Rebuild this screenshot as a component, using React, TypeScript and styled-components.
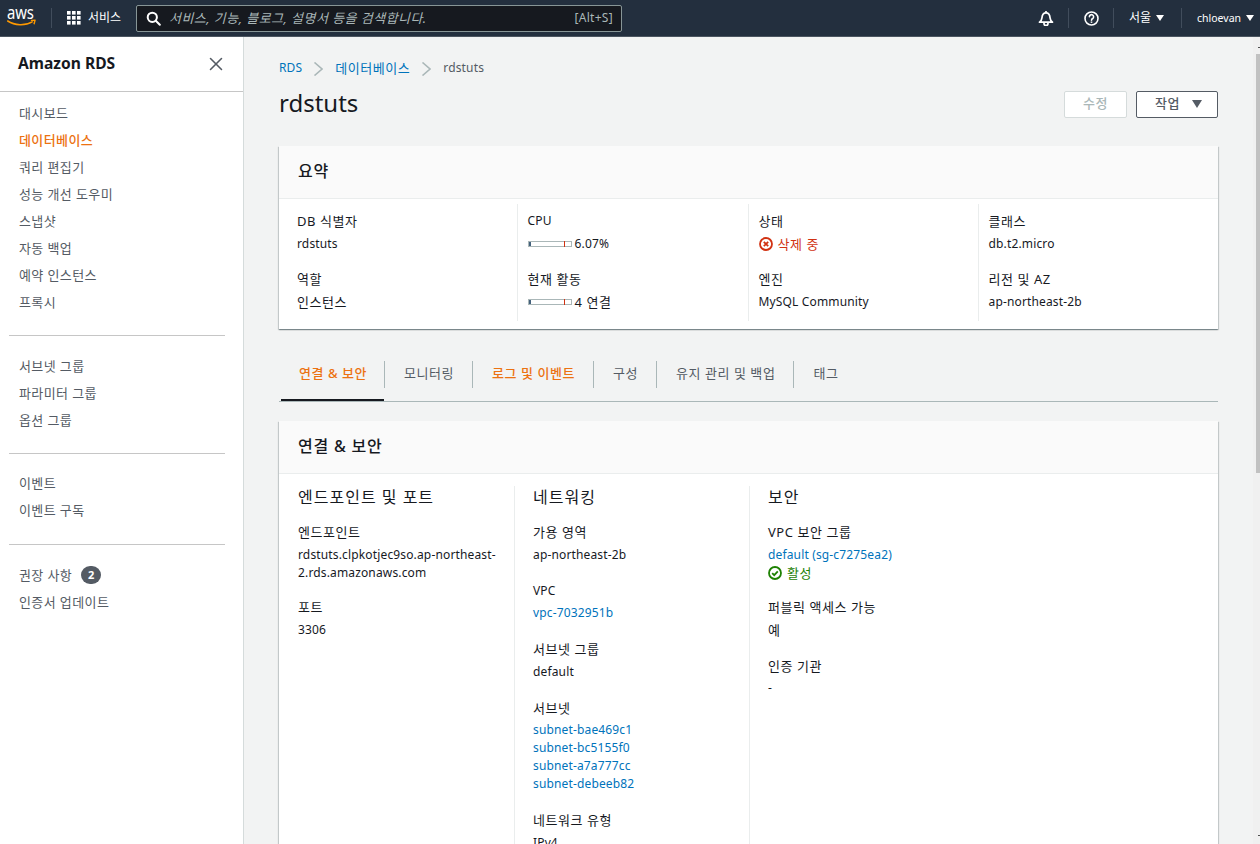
import styled, { createGlobalStyle } from "styled-components";
import { X } from "lucide-react";

const GlobalStyle = createGlobalStyle`
  html, body {
    margin: 0;
    height: 100%;
    overflow: hidden;
  }
  body {
    font-family: "Noto Sans", "Noto Sans CJK KR", sans-serif;
    font-size: 12px;
    line-height: 18px;
    color: #16191f;
    background: #f2f3f3;
  }
`;

const Page = styled.div`
  width: 1260px;
  height: 844px;
  display: flex;
  flex-direction: column;
  overflow: hidden;
`;

const TopBar = styled.header`
  flex: 0 0 37px;
  height: 37px;
  box-sizing: border-box;
  background: #232f3e;
  border-bottom: 1px solid #4b5560;
  display: flex;
  align-items: center;
  color: #fff;
`;

const LogoBox = styled.div`
  width: 51px;
  box-sizing: border-box;
  padding-left: 7px;
  display: flex;
  align-items: center;
`;

const BarDivider = styled.span`
  width: 1px;
  height: 20px;
  background: #414d5c;
`;

const ServicesButton = styled.div`
  display: flex;
  align-items: center;
  gap: 7px;
  margin-left: 15px;
  width: 69px;
  font-size: 12px;
  color: #fff;
`;

const SearchBox = styled.div`
  width: 486px;
  height: 27px;
  box-sizing: border-box;
  background: #16191f;
  border: 1px solid #879596;
  border-radius: 2px;
  display: flex;
  align-items: center;
  padding: 0 8px 0 9px;
  gap: 8px;
`;

const SearchHint = styled.span`
  flex: 1;
  font-size: 13px;
  font-style: italic;
  letter-spacing: 0.45px;
  color: #aab7b8;
`;

const SearchKey = styled.span`
  font-size: 12px;
  letter-spacing: 0.3px;
  color: #aab7b8;
`;

const BarRight = styled.div`
  margin-left: auto;
  display: flex;
  align-items: center;
`;

const BarIcon = styled.div`
  width: 44px;
  display: flex;
  justify-content: center;
`;

const BarMenu = styled.div<{ $width: number; $small?: boolean }>`
  width: ${(p) => p.$width}px;
  box-sizing: border-box;
  padding-left: 15px;
  display: flex;
  align-items: center;
  gap: 5px;
  font-size: ${(p) => (p.$small ? 10.5 : 12)}px;
  color: #fff;
  white-space: nowrap;
`;

const SmallCaret = styled.span`
  width: 0;
  height: 0;
  border-left: 4px solid transparent;
  border-right: 4px solid transparent;
  border-top: 6px solid #fff;
`;

const Body = styled.div`
  flex: 1;
  display: flex;
  min-height: 0;
`;

const Sidebar = styled.aside`
  flex: 0 0 244px;
  box-sizing: border-box;
  background: #fff;
  border-right: 1px solid #d5dbdb;
`;

const SideHeader = styled.div`
  height: 55px;
  box-sizing: border-box;
  border-bottom: 1px solid #c6c6c6;
  display: flex;
  align-items: center;
  justify-content: space-between;
  padding: 0 16px 0 18px;
`;

const SideTitle = styled.span`
  font-size: 15.6px;
  font-weight: 700;
  line-height: 22px;
  padding-bottom: 2px;
`;

const SideGroup = styled.ul<{ $top: number; $bottom: number; $last?: boolean }>`
  list-style: none;
  margin: 0 18px 0 9px;
  padding: ${(p) => p.$top}px 0 ${(p) => p.$bottom}px 10px;
  border-bottom: ${(p) => (p.$last ? "none" : "1px solid #c6c6c6")};
`;

const SideItem = styled.li<{ $active?: boolean }>`
  height: 27px;
  display: flex;
  align-items: center;
  gap: 9px;
  font-size: 13px;
  letter-spacing: 0.4px;
  color: ${(p) => (p.$active ? "#ec7211" : "#545b64")};
  font-weight: ${(p) => (p.$active ? 500 : 400)};
`;

const CountBadge = styled.span`
  width: 20px;
  height: 18px;
  border-radius: 9px;
  background: #545b64;
  color: #fff;
  font-size: 11px;
  font-weight: 700;
  display: flex;
  align-items: center;
  justify-content: center;
`;

const Main = styled.main`
  flex: 1;
  min-width: 0;
  padding: 0 35px;
  overflow: hidden;
`;

const Scrollbar = styled.div`
  position: relative;
  flex: 0 0 7px;
  background: #f0f0f0;
  padding: 17px 0 0 3px;
  box-sizing: border-box;
  &::before,
  &::after {
    content: "";
    position: absolute;
    right: 0;
    width: 2px;
    height: 1px;
    background: #505050;
  }
  &::before {
    top: 10px;
  }
  &::after {
    bottom: 8px;
  }
`;

const ScrollThumb = styled.div`
  height: 419px;
  background: #c1c1c1;
`;

const Breadcrumbs = styled.nav`
  height: 18px;
  margin-top: 22px;
  display: flex;
  align-items: center;
  font-size: 12px;
  letter-spacing: 0.15px;
  color: #545b64;
`;

const Crumb = styled.a<{ $ko?: boolean }>`
  color: #0073bb;
  font-size: ${(p) => (p.$ko ? 13 : 12)}px;
  letter-spacing: ${(p) => (p.$ko ? 0.55 : 0.15)}px;
`;

const CrumbArrow = styled.svg`
  width: 10px;
  height: 14px;
  margin: 2px 12px 0 11px;
  fill: none;
  stroke: #aab7b8;
  stroke-width: 1.6;
`;

const TitleRow = styled.div`
  display: flex;
  align-items: center;
  justify-content: space-between;
  height: 36px;
  margin-top: 9px;
`;

const Title = styled.h1`
  margin: 0;
  padding-bottom: 2px;
  font-size: 24px;
  line-height: 34px;
  font-weight: 400;
  color: #16191f;
`;

const Actions = styled.div`
  display: flex;
  gap: 9px;
`;

const EditButton = styled.button`
  width: 63px;
  height: 27px;
  box-sizing: border-box;
  background: #fff;
  border: 1px solid #d5dbdb;
  border-radius: 2px;
  font: inherit;
  font-size: 13px;
  letter-spacing: 0.5px;
  font-weight: 500;
  color: #aab7b8;
  padding: 0 0 3px;
`;

const ActionButton = styled.button`
  width: 82px;
  height: 27px;
  box-sizing: border-box;
  background: #fff;
  border: 1px solid #545b64;
  border-radius: 2px;
  font: inherit;
  font-size: 13px;
  letter-spacing: 0.5px;
  font-weight: 500;
  color: #545b64;
  display: flex;
  align-items: center;
  padding: 0 0 3px 18px;
  gap: 12px;
`;

const ActionCaret = styled.span`
  width: 0;
  height: 0;
  margin-top: 3px;
  border-left: 5px solid transparent;
  border-right: 5px solid transparent;
  border-top: 8px solid #545b64;
`;

const Card = styled.section<{ $top: number }>`
  margin-top: ${(p) => p.$top}px;
  background: #fff;
  box-shadow: 0 1px 1px 0 rgba(0, 28, 36, 0.3), 1px 1px 1px 0 rgba(0, 28, 36, 0.15),
    -1px 1px 1px 0 rgba(0, 28, 36, 0.15);
`;

const CardHeader = styled.div`
  height: 53px;
  box-sizing: border-box;
  background: #fafafa;
  border-bottom: 1px solid #eaeded;
  display: flex;
  align-items: center;
  padding: 0 0 3px 19px;
  font-size: 16px;
  letter-spacing: 0.8px;
  font-weight: 500;
`;

const SummaryGrid = styled.div`
  display: grid;
  grid-template-columns: 238px 231px 230px 1fr;
  padding: 5px 0 8px;
`;

const SummaryColumn = styled.div`
  box-sizing: border-box;
  padding: 8px 10px 10px 18px;
  display: flex;
  flex-direction: column;
  gap: 17px;
  & + & {
    border-left: 1px solid #eaeded;
    padding-left: 9.5px;
  }
`;

const Field = styled.div`
  display: flex;
  flex-direction: column;
  gap: 5px;
`;

const Label = styled.div<{ $latin?: boolean }>`
  font-size: ${(p) => (p.$latin ? 12 : 13)}px;
  letter-spacing: ${(p) => (p.$latin ? 0.15 : 0.55)}px;
  line-height: 18px;
  color: #16191f;
`;

const Value = styled.div<{ $ko?: boolean }>`
  font-size: ${(p) => (p.$ko ? 13 : 12)}px;
  letter-spacing: ${(p) => (p.$ko ? 0.55 : 0.15)}px;
  line-height: 18px;
  min-height: 18px;
  color: #16191f;
`;

const Meter = styled.div`
  display: flex;
  align-items: center;
  gap: 3px;
`;

const MeterTrack = styled.div`
  position: relative;
  box-sizing: border-box;
  width: 44px;
  height: 6px;
  border: 1px solid #aab7b8;
  background: #fff;
`;

const MeterFill = styled.div`
  height: 100%;
  background: #44617c;
`;

const MeterMark = styled.span`
  position: absolute;
  left: 35px;
  top: -1px;
  bottom: -1px;
  width: 1px;
  background: #d13212;
`;

const Status = styled.div<{ $color: string }>`
  display: flex;
  align-items: center;
  gap: 5px;
  font-size: 13px;
  letter-spacing: 0.55px;
  line-height: 18px;
  color: ${(p) => p.$color};
`;

const Tabs = styled.div`
  margin-top: 32px;
  height: 41px;
  box-sizing: border-box;
  display: flex;
  padding-left: 2px;
  border-bottom: 1px solid #aab7b8;
`;

const Tab = styled.div<{ $active?: boolean; $orange?: boolean }>`
  position: relative;
  height: 40px;
  box-sizing: border-box;
  padding: 0 18px 14px 20px;
  display: flex;
  align-items: center;
  font-size: 13px;
  letter-spacing: 0.55px;
  font-weight: ${(p) => (p.$orange ? 500 : 400)};
  color: ${(p) => (p.$orange ? "#ec7211" : "#545b64")};
  border-bottom: 2px solid ${(p) => (p.$active ? "#16191f" : "transparent")};
  &:first-child {
    padding-left: 18px;
    padding-right: 17px;
  }
  &:not(:first-child)::before {
    content: "";
    position: absolute;
    left: 0;
    top: 0;
    height: 27px;
    width: 1px;
    background: #aab7b8;
  }
`;

const ConnGrid = styled.div`
  display: grid;
  grid-template-columns: 235px 235px 1fr;
  padding-top: 12px;
`;

const ConnColumn = styled.div`
  box-sizing: border-box;
  padding: 0 16px 0 19px;
  & + & {
    border-left: 1px solid #eaeded;
    padding-left: 18px;
  }
`;

const ColumnTitle = styled.h3`
  margin: 0 0 15px;
  font-size: 16px;
  letter-spacing: 1px;
  line-height: 22px;
  font-weight: 400;
  color: #16191f;
`;

const ConnField = styled.div<{ $tight?: boolean }>`
  margin-bottom: ${(p) => (p.$tight ? 16.5 : 18)}px;
`;

const ConnLabel = styled(Label)`
  margin-bottom: 4.5px;
`;

const LinkText = styled.a`
  display: block;
  letter-spacing: 0.15px;
  color: #0073bb;
`;

const AwsLogo = () => (
  <svg width="32" height="36" viewBox="0 0 32 36">
    <text
      transform="translate(0 19) scale(0.85 1)"
      fill="#fff"
      fontFamily="'Noto Sans', sans-serif"
      fontSize="17.5"
      letterSpacing="-0.2"
    >
      aws
    </text>
    <path d="M0.700 21c7 4.600 17.500 5 24.500 0.800" fill="none" stroke="#ff9900" strokeWidth="1.5" strokeLinecap="round" />
    <path d="M24.500 20.400l3.600-0.300-1 3.600" fill="none" stroke="#ff9900" strokeWidth="1.4" strokeLinecap="round" strokeLinejoin="round" />
  </svg>
);

const GridIcon = () => (
  <svg width="14" height="14" viewBox="0 0 14 14" fill="#fff">
    {[0, 5, 10].map((y) =>
      [0, 5, 10].map((x) => <rect key={`${x}-${y}`} x={x} y={y} width="3.6" height="3.6" />)
    )}
  </svg>
);

const SearchIcon = () => (
  <svg width="15" height="15" viewBox="0 0 15 15" fill="none" stroke="#fff" strokeWidth="2">
    <circle cx="6.3" cy="6.3" r="4.6" />
    <path d="M9.8 9.8l4 4" strokeLinecap="round" />
  </svg>
);

const BellIcon = () => (
  <svg width="16" height="16" viewBox="0 0 16 16" fill="none" stroke="#fff" strokeWidth="1.7" strokeLinejoin="round">
    <path d="M1.5 12.2c1.6-1.2 2.3-2.2 2.5-4.6C4.200 4.500 5.700 2.800 8 2.800s3.800 1.700 4 4.800c.2 2.400.9 3.400 2.500 4.600z" />
    <path d="M6 13v.6a2 2 0 0 0 4 0V13M8 1v1.800" />
  </svg>
);

const HelpIcon = () => (
  <svg width="15" height="15" viewBox="0 0 15 15" fill="none" stroke="#fff" strokeWidth="1.6">
    <circle cx="7.500" cy="7.500" r="6.500" />
    <path d="M5.400 5.800a2.100 2.100 0 1 1 3.300 1.700c-.8.500-1.200 1-1.200 1.800" strokeLinecap="round" />
    <path d="M7.500 10.500v1.400" />
  </svg>
);

const ErrorIcon = () => (
  <svg width="14" height="14" viewBox="0 0 14 14" fill="none" stroke="#d13212" strokeWidth="1.8">
    <circle cx="7" cy="7" r="6" />
    <path d="M4.800 4.800l4.400 4.400M9.200 4.800l-4.400 4.400" />
  </svg>
);

const OkIcon = () => (
  <svg width="14" height="14" viewBox="0 0 14 14" fill="none" stroke="#1d8102" strokeWidth="1.8">
    <circle cx="7" cy="7" r="6" />
    <path d="M4.200 7.200l2 2 3.600-3.900" />
  </svg>
);

const Arrow = () => (
  <CrumbArrow viewBox="0 0 10 14">
    <path d="M1.500 0.500l7.500 6.500-7.500 6.500" />
  </CrumbArrow>
);

const menuGroups = [
  {
    top: 7,
    bottom: 20,
    items: ["대시보드", "데이터베이스", "쿼리 편집기", "성능 개선 도우미", "스냅샷", "자동 백업", "예약 인스턴스", "프록시"],
  },
  { top: 16, bottom: 20, items: ["서브넷 그룹", "파라미터 그룹", "옵션 그룹"] },
  { top: 15, bottom: 21, items: ["이벤트", "이벤트 구독"] },
];

const tabs = ["연결 & 보안", "모니터링", "로그 및 이벤트", "구성", "유지 관리 및 백업", "태그"];
const subnets = ["subnet-bae469c1", "subnet-bc5155f0", "subnet-a7a777cc", "subnet-debeeb82"];

const App = () => {
  return (
    <Page>
      <GlobalStyle />
      <TopBar>
        <LogoBox>
          <AwsLogo />
        </LogoBox>
        <BarDivider />
        <ServicesButton>
          <GridIcon />
          서비스
        </ServicesButton>
        <SearchBox>
          <SearchIcon />
          <SearchHint>서비스, 기능, 블로그, 설명서 등을 검색합니다.</SearchHint>
          <SearchKey>[Alt+S]</SearchKey>
        </SearchBox>
        <BarRight>
          <BarIcon>
            <BellIcon />
          </BarIcon>
          <BarDivider />
          <BarIcon>
            <HelpIcon />
          </BarIcon>
          <BarDivider />
          <BarMenu $width={67}>
            서울
            <SmallCaret />
          </BarMenu>
          <BarDivider />
          <BarMenu $width={78} $small>
            chloevan
            <SmallCaret />
          </BarMenu>
        </BarRight>
      </TopBar>
      <Body>
        <Sidebar>
          <SideHeader>
            <SideTitle>Amazon RDS</SideTitle>
            <X size={22} color="#545b64" strokeWidth={1.7} />
          </SideHeader>
          {menuGroups.map((group) => (
            <SideGroup key={group.items[0]} $top={group.top} $bottom={group.bottom}>
              {group.items.map((item) => (
                <SideItem key={item} $active={item === "데이터베이스"}>
                  {item}
                </SideItem>
              ))}
            </SideGroup>
          ))}
          <SideGroup $top={16} $bottom={0} $last>
            <SideItem>
              권장 사항 <CountBadge>2</CountBadge>
            </SideItem>
            <SideItem>인증서 업데이트</SideItem>
          </SideGroup>
        </Sidebar>
        <Main>
          <Breadcrumbs>
            <Crumb>RDS</Crumb>
            <Arrow />
            <Crumb $ko>데이터베이스</Crumb>
            <Arrow />
            rdstuts
          </Breadcrumbs>
          <TitleRow>
            <Title>rdstuts</Title>
            <Actions>
              <EditButton>수정</EditButton>
              <ActionButton>
                작업
                <ActionCaret />
              </ActionButton>
            </Actions>
          </TitleRow>
          <Card $top={24}>
            <CardHeader>요약</CardHeader>
            <SummaryGrid>
              <SummaryColumn>
                <Field>
                  <Label>DB 식별자</Label>
                  <Value>rdstuts</Value>
                </Field>
                <Field>
                  <Label>역할</Label>
                  <Value $ko>인스턴스</Value>
                </Field>
              </SummaryColumn>
              <SummaryColumn>
                <Field>
                  <Label $latin>CPU</Label>
                  <Meter>
                    <MeterTrack>
                      <MeterFill style={{ width: "7%" }} />
                      <MeterMark />
                    </MeterTrack>
                    <Value>6.07%</Value>
                  </Meter>
                </Field>
                <Field>
                  <Label>현재 활동</Label>
                  <Meter>
                    <MeterTrack>
                      <MeterFill style={{ width: "5%" }} />
                      <MeterMark />
                    </MeterTrack>
                    <Value $ko>4 연결</Value>
                  </Meter>
                </Field>
              </SummaryColumn>
              <SummaryColumn>
                <Field>
                  <Label>상태</Label>
                  <Status $color="#d13212">
                    <ErrorIcon />
                    삭제 중
                  </Status>
                </Field>
                <Field>
                  <Label>엔진</Label>
                  <Value>MySQL Community</Value>
                </Field>
              </SummaryColumn>
              <SummaryColumn>
                <Field>
                  <Label>클래스</Label>
                  <Value>db.t2.micro</Value>
                </Field>
                <Field>
                  <Label>리전 및 AZ</Label>
                  <Value>ap-northeast-2b</Value>
                </Field>
              </SummaryColumn>
            </SummaryGrid>
          </Card>
          <Tabs>
            {tabs.map((tab, i) => (
              <Tab key={tab} $active={i === 0} $orange={i === 0 || i === 2}>
                {tab}
              </Tab>
            ))}
          </Tabs>
          <Card $top={19}>
            <CardHeader>연결 &amp; 보안</CardHeader>
            <ConnGrid>
              <ConnColumn>
                <ColumnTitle>엔드포인트 및 포트</ColumnTitle>
                <ConnField $tight>
                  <ConnLabel>엔드포인트</ConnLabel>
                  <Value>rdstuts.clpkotjec9so.ap-northeast-2.rds.amazonaws.com</Value>
                </ConnField>
                <ConnField>
                  <ConnLabel>포트</ConnLabel>
                  <Value>3306</Value>
                </ConnField>
              </ConnColumn>
              <ConnColumn>
                <ColumnTitle>네트워킹</ColumnTitle>
                <ConnField>
                  <ConnLabel>가용 영역</ConnLabel>
                  <Value>ap-northeast-2b</Value>
                </ConnField>
                <ConnField>
                  <ConnLabel $latin>VPC</ConnLabel>
                  <LinkText>vpc-7032951b</LinkText>
                </ConnField>
                <ConnField>
                  <ConnLabel>서브넷 그룹</ConnLabel>
                  <Value>default</Value>
                </ConnField>
                <ConnField>
                  <ConnLabel>서브넷</ConnLabel>
                  {subnets.map((subnet) => (
                    <LinkText key={subnet}>{subnet}</LinkText>
                  ))}
                </ConnField>
                <ConnField>
                  <ConnLabel>네트워크 유형</ConnLabel>
                  <Value>IPv4</Value>
                </ConnField>
              </ConnColumn>
              <ConnColumn>
                <ColumnTitle>보안</ColumnTitle>
                <ConnField $tight>
                  <ConnLabel>VPC 보안 그룹</ConnLabel>
                  <LinkText>default (sg-c7275ea2)</LinkText>
                  <Status $color="#1d8102">
                    <OkIcon />
                    활성
                  </Status>
                </ConnField>
                <ConnField>
                  <ConnLabel>퍼블릭 액세스 가능</ConnLabel>
                  <Value $ko>예</Value>
                </ConnField>
                <ConnField>
                  <ConnLabel>인증 기관</ConnLabel>
                  <Value>-</Value>
                </ConnField>
              </ConnColumn>
            </ConnGrid>
          </Card>
        </Main>
        <Scrollbar>
          <ScrollThumb />
        </Scrollbar>
      </Body>
    </Page>
  );
};

export default App;
